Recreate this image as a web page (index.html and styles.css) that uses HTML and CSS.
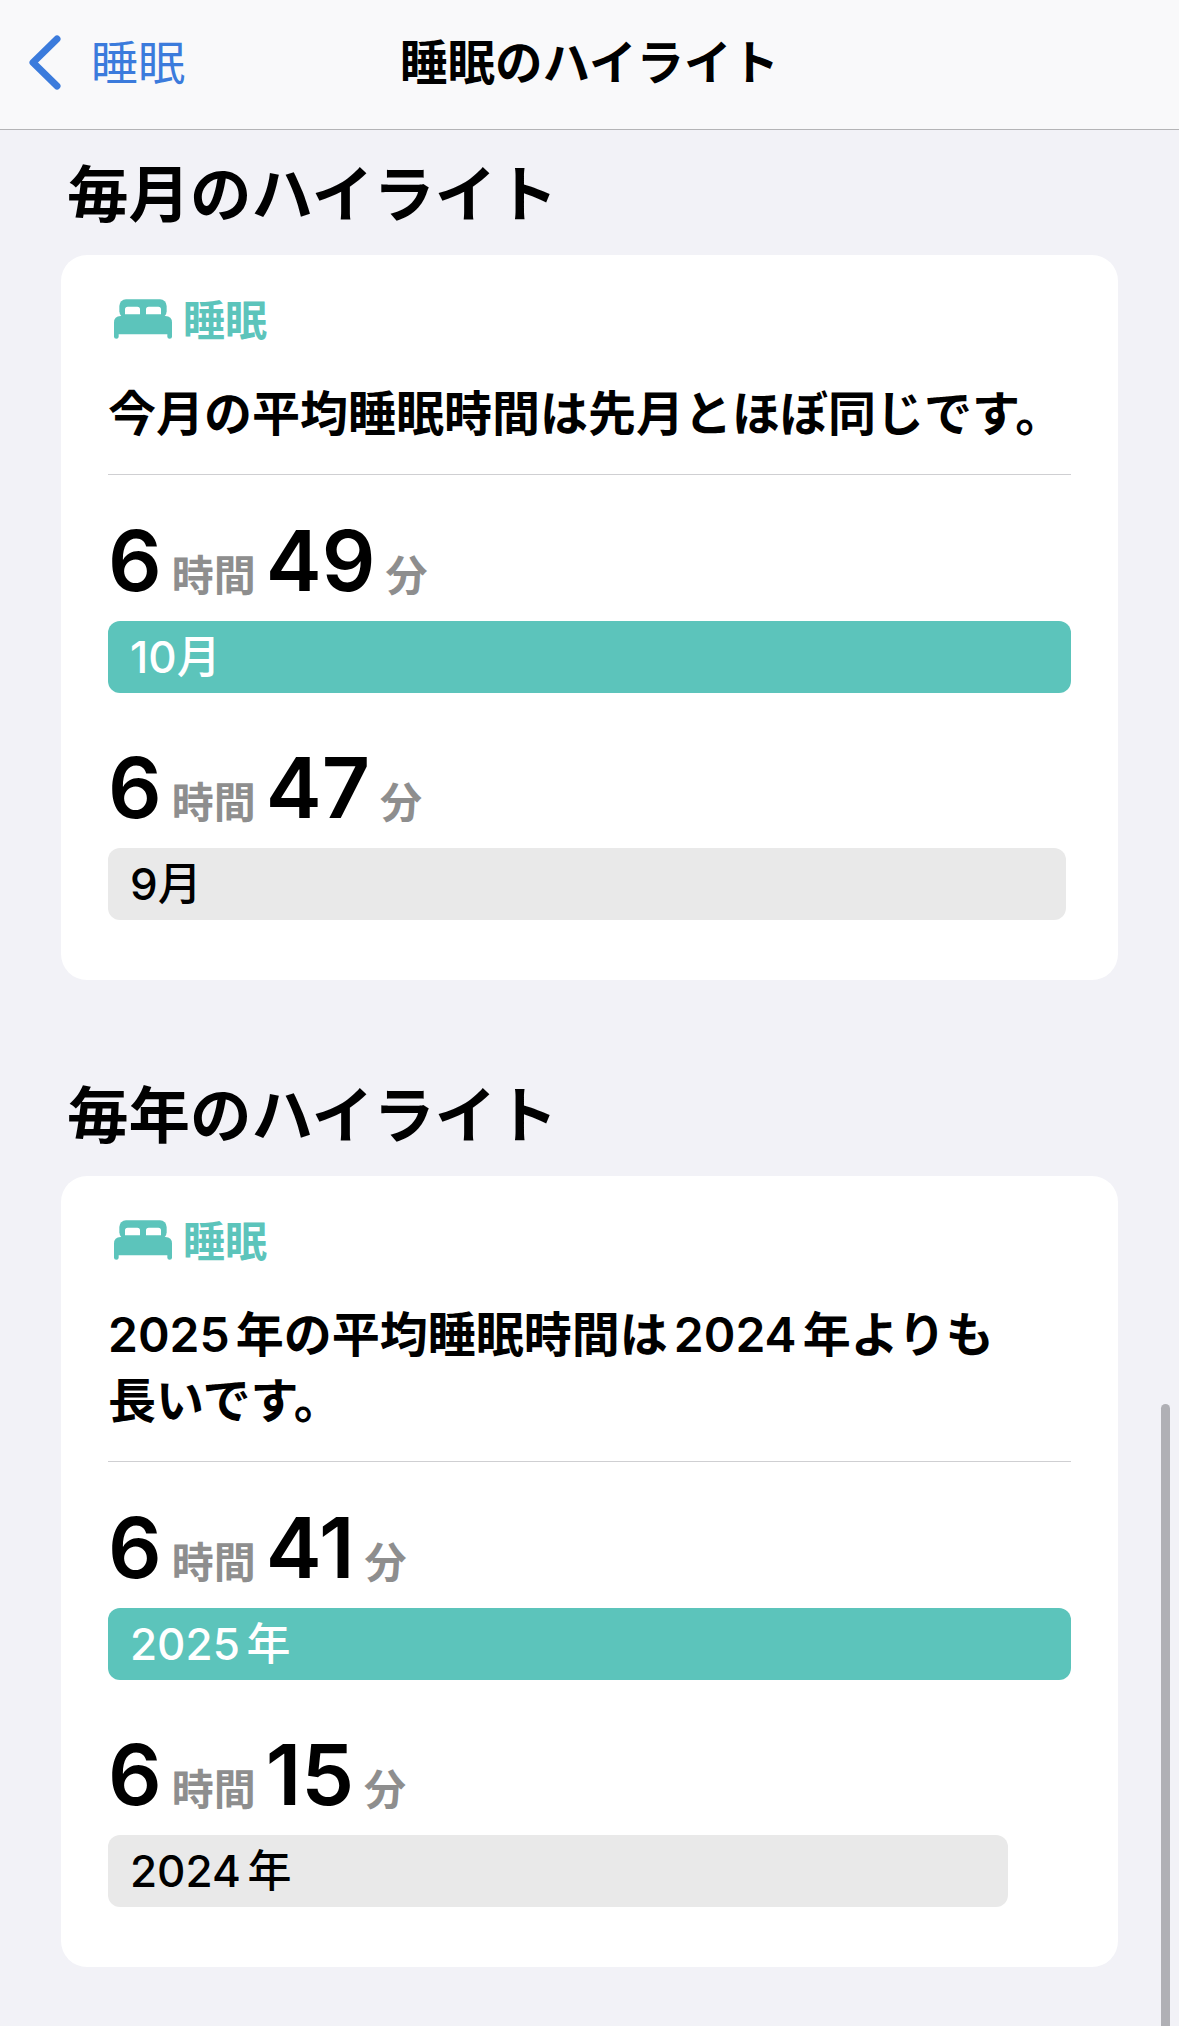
FILE: index.html
```html
<!DOCTYPE html>
<html lang="ja">
<head>
<meta charset="utf-8">
<title>睡眠のハイライト</title>
<link rel="stylesheet" href="styles.css">
</head>
<body>
<header class="nav">
	<a class="back">
		<svg class="chevron" viewBox="0 0 33 55"><path d="M29 4 L5 27.5 L29 51"/></svg>
		<span>睡眠</span>
	</a>
	<div class="nav-title">睡眠のハイライト</div>
</header>

<main class="content">
	<section class="section">
		<h2 class="section-title">毎月のハイライト</h2>
		<div class="card">
			<div class="label">
				<svg class="bed" viewBox="0 0 174 118"><rect x="16" width="142" height="56" rx="20"/><path class="pillow" d="M33 45 V30 Q33 22 41 22 H70 Q78 22 78 30 V45 Z M96 45 V30 Q96 22 104 22 H133 Q141 22 141 30 V45 Z"/><path d="M0 70 Q0 50 20 50 H154 Q174 50 174 70 V112 a7 6 0 0 1 -14 0 V105 H14 V112 a7 6 0 0 1 -14 0 Z"/></svg>
				<span>睡眠</span>
			</div>
			<p class="summary">今月の平均睡眠時間は先月とほぼ同じです。</p>
			<div class="divider"></div>
			<div class="value"><span class="num">6</span><span class="unit">時間</span><span class="num">49</span><span class="unit">分</span></div>
			<div class="bar bar-now" style="width:100%">10月</div>
			<div class="value"><span class="num">6</span><span class="unit">時間</span><span class="num">47</span><span class="unit">分</span></div>
			<div class="bar bar-prev" style="width:99.5%">9月</div>
		</div>
	</section>

	<section class="section">
		<h2 class="section-title">毎年のハイライト</h2>
		<div class="card">
			<div class="label">
				<svg class="bed" viewBox="0 0 174 118"><rect x="16" width="142" height="56" rx="20"/><path class="pillow" d="M33 45 V30 Q33 22 41 22 H70 Q78 22 78 30 V45 Z M96 45 V30 Q96 22 104 22 H133 Q141 22 141 30 V45 Z"/><path d="M0 70 Q0 50 20 50 H154 Q174 50 174 70 V112 a7 6 0 0 1 -14 0 V105 H14 V112 a7 6 0 0 1 -14 0 Z"/></svg>
				<span>睡眠</span>
			</div>
			<p class="summary">2025 年の平均睡眠時間は 2024 年よりも<br>長いです。</p>
			<div class="divider"></div>
			<div class="value"><span class="num">6</span><span class="unit">時間</span><span class="num">41</span><span class="unit">分</span></div>
			<div class="bar bar-now" style="width:100%">2025 年</div>
			<div class="value"><span class="num">6</span><span class="unit">時間</span><span class="num">15</span><span class="unit">分</span></div>
			<div class="bar bar-prev" style="width:93.5%">2024 年</div>
		</div>
	</section>
</main>

<div class="scrollbar"></div>
</body>
</html>
```

FILE: styles.css
```css
* {
	box-sizing: border-box;
}

body {
	margin: 0;
	height: 2026px;
	overflow: hidden;
	position: relative;
	background-color: #f2f2f7;
	color: #000;
	font-family: Inter, "Noto Sans CJK JP", sans-serif;
}

/* top bar */
.nav {
	height: 130px;
	display: flex;
	align-items: center;
	justify-content: center;
	position: relative;
	background-color: #f9f9fa;
	border-bottom: 1px solid #b4b4b6;
}

.back {
	position: absolute;
	left: 28px;
	top: 35px;
	display: flex;
	align-items: center;
	gap: 30px;
	color: #3b7bdc;
	font-size: 47px;
	line-height: 55px;
}

.chevron {
	width: 33px;
	height: 55px;
}

.chevron path {
	fill: none;
	stroke: #3b7bdc;
	stroke-width: 7;
	stroke-linecap: round;
	stroke-linejoin: round;
}

.nav-title {
	font-size: 47.5px;
	font-weight: 600;
	line-height: 60px;
	margin-top: -4px;
}

/* sections */
.content {
	padding: 25px 61px 0;
}

.section {
	margin-bottom: 96px;
}

.section-title {
	margin: 0 0 20px 6px;
	font-size: 61.5px;
	font-weight: 700;
	line-height: 80px;
}

.card {
	background-color: #fff;
	border-radius: 26px;
	padding: 37px 47px 60px;
}

.label {
	display: flex;
	align-items: center;
	gap: 11px;
	height: 50px;
	padding-left: 6px;
	color: #5cc4bb;
	font-size: 42px;
	font-weight: 600;
}

.bed {
	width: 58px;
	height: 40px;
	margin-top: 3px;
	fill: #5cc4bb;
}

.bed .pillow {
	fill: #fff;
}

.summary {
	margin: 39px 0 0;
	font-size: 48px;
	font-weight: 600;
	line-height: 66px;
	word-spacing: -6px;
}

.divider {
	margin-top: 27px;
	height: 1px;
	background-color: #cfcfd2;
}

.value {
	display: flex;
	align-items: baseline;
	height: 120px;
	padding-top: 42px;
	line-height: 88px;
}

.num {
	font-size: 84px;
	font-weight: 600;
}

.unit {
	margin: 0 10px;
	color: #8e8e8e;
	font-size: 42px;
	font-weight: 600;
}

.value + .bar {
	margin-top: 26px;
}

.bar + .value {
	margin-top: 9px;
}

.bar {
	height: 72px;
	border-radius: 12px;
	padding-left: 22px;
	font-size: 44px;
	font-weight: 500;
	line-height: 72px;
	word-spacing: -5px;
}

.bar-now {
	background-color: #5cc4bb;
	color: #fff;
}

.bar-prev {
	background-color: #e9e9e9;
}

.scrollbar {
	position: absolute;
	left: 1161px;
	top: 1404px;
	width: 9px;
	bottom: 0;
	border-radius: 5px 5px 0 0;
	background-color: #b0b0b5;
}
```
